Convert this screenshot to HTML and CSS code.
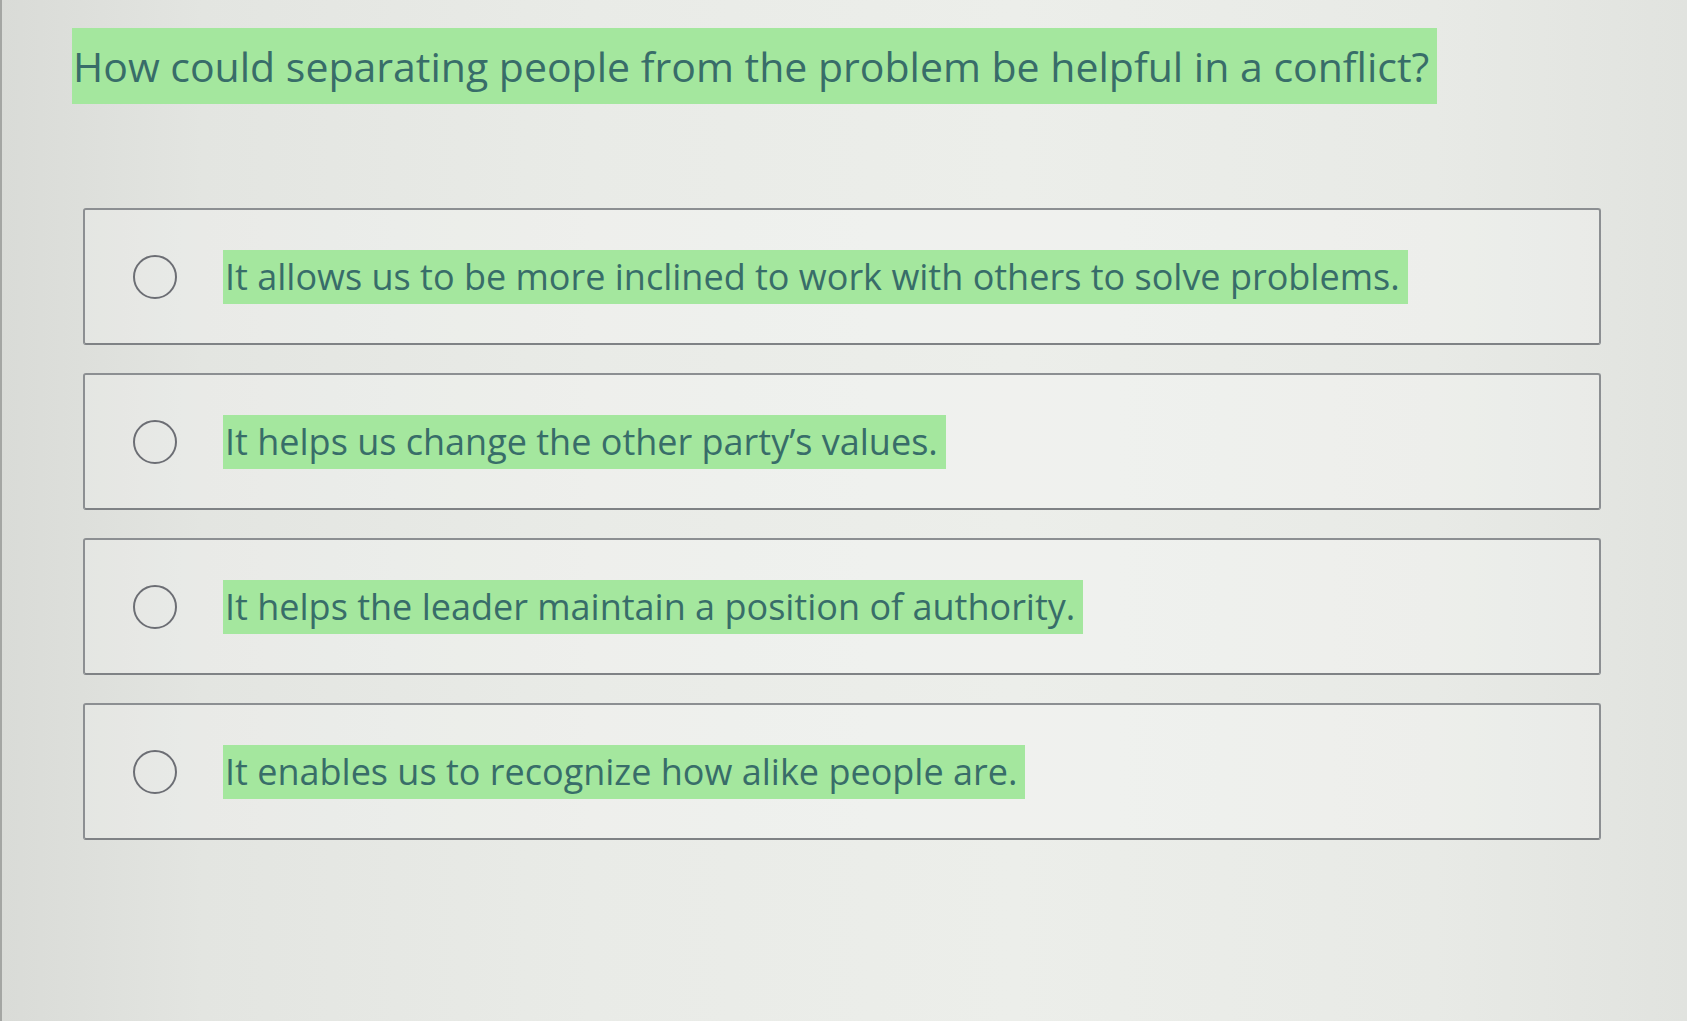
FILE: index.html
```html
<!DOCTYPE html>
<html lang="en">
<head>
<meta charset="utf-8">
<title>Quiz question</title>
<link rel="stylesheet" href="styles.css">
</head>
<body>
<main class="quiz">
  <h1 class="question"><span class="hl">How could separating people from the problem be helpful in a conflict?</span></h1>
  <div class="options">
    <label class="option"><span class="radio"></span><span class="hl">It allows us to be more inclined to work with others to solve problems.</span></label>
    <label class="option"><span class="radio"></span><span class="hl">It helps us change the other party’s values.</span></label>
    <label class="option"><span class="radio"></span><span class="hl">It helps the leader maintain a position of authority.</span></label>
    <label class="option"><span class="radio"></span><span class="hl">It enables us to recognize how alike people are.</span></label>
  </div>
</main>
</body>
</html>
```
FILE: styles.css
```css
html, body {
  margin: 0;
  height: 100%;
}
body {
  font-family: "Open Sans", "Noto Sans", "Liberation Sans", sans-serif;
  color: #386d69;
  background: linear-gradient(90deg, #d9dbd7 0%, #e3e5e1 12%, #e9ebe7 35%, #eceeea 60%, #e8eae6 85%, #e1e3df 100%);
  border-left: 2px solid #a4a6a3;
  box-sizing: border-box;
}
.quiz {
  padding: 28px 0 0 70px;
}
.question {
  margin: 0;
  font-size: 41px;
  font-weight: 400;
  line-height: 56px;
}
.hl {
  display: inline-block;
  background: #a4e79e;
}
.question .hl {
  padding: 10px 8px 10px 1px;
}
.options {
  margin: 104px 0 0 11px;
  width: 1518px;
  display: flex;
  flex-direction: column;
  gap: 28px;
}
.option {
  display: flex;
  align-items: center;
  box-sizing: border-box;
  height: 137px;
  padding-left: 48px;
  border: 2px solid #8c8f92;
  border-bottom-color: #7f8285;
  border-radius: 3px;
  background: rgba(255, 255, 255, 0.22);
}
.radio {
  flex: none;
  box-sizing: border-box;
  width: 44px;
  height: 44px;
  margin-right: 46px;
  border: 2.5px solid #6c6e74;
  border-radius: 50%;
}
.option .hl {
  font-size: 36px;
  line-height: 50px;
  padding: 2px 8px 2px 2px;
}
```
